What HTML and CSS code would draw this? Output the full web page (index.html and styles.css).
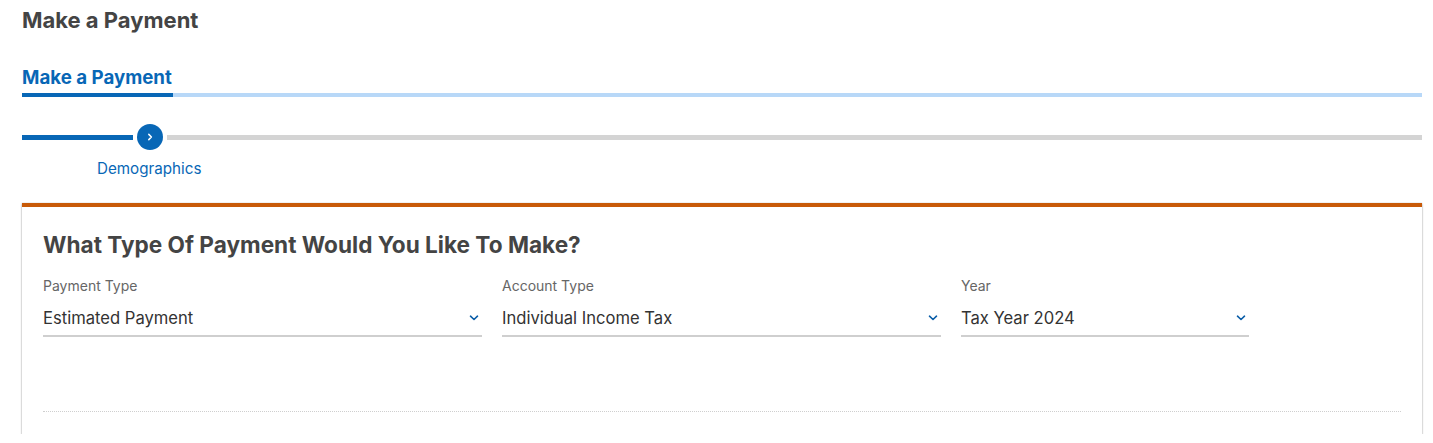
FILE: index.html
```html
<!DOCTYPE html>
<html lang="en">
<head>
<meta charset="utf-8">
<title>Make a Payment</title>
<link rel="stylesheet" href="styles.css">
</head>
<body>
<div class="page">
  <h1 class="page-title">Make a Payment</h1>
  <div class="tabs">
    <div class="tab active">Make a Payment</div>
  </div>
  <div class="stepper">
    <div class="step">
      <div class="step-track">
        <span class="seg seg-done"></span>
        <span class="step-dot">
          <svg width="10" height="10" viewBox="0 0 10 10"><path d="M3.8 2.4 L6.4 5 L3.8 7.6" fill="none" stroke="#fff" stroke-width="1.5" stroke-linecap="round" stroke-linejoin="round"/></svg>
        </span>
        <span class="seg seg-todo first"></span>
      </div>
      <div class="step-label">Demographics</div>
    </div>
    <div class="rest"></div>
  </div>
  <div class="card">
    <h2 class="card-title">What Type Of Payment Would You Like To Make?</h2>
    <div class="fields">
      <div class="field w-lg">
        <label class="field-label">Payment Type</label>
        <div class="select"><span>Estimated Payment</span><svg class="chev" width="10" height="6" viewBox="0 0 10 6"><path d="M1.5 1.2 L5 4.5 L8.5 1.2" fill="none" stroke="#0b5ea8" stroke-width="1.6" stroke-linecap="round" stroke-linejoin="round"/></svg></div>
      </div>
      <div class="field w-lg">
        <label class="field-label">Account Type</label>
        <div class="select"><span>Individual Income Tax</span><svg class="chev" width="10" height="6" viewBox="0 0 10 6"><path d="M1.5 1.2 L5 4.5 L8.5 1.2" fill="none" stroke="#0b5ea8" stroke-width="1.6" stroke-linecap="round" stroke-linejoin="round"/></svg></div>
      </div>
      <div class="field w-sm">
        <label class="field-label">Year</label>
        <div class="select"><span>Tax Year 2024</span><svg class="chev" width="10" height="6" viewBox="0 0 10 6"><path d="M1.5 1.2 L5 4.5 L8.5 1.2" fill="none" stroke="#0b5ea8" stroke-width="1.6" stroke-linecap="round" stroke-linejoin="round"/></svg></div>
      </div>
    </div>
    <div class="dotted"></div>
  </div>
</div>
</body>
</html>
```
FILE: styles.css
```css
* { box-sizing: border-box; }
html, body { margin: 0; padding: 0; background: #fff; }
body {
  font-family: Inter, "Noto Sans", "Liberation Sans", sans-serif;
  color: #444;
}
.page { padding: 6px 11px 0 22px; }

.page-title {
  margin: 0;
  font-size: 22px;
  line-height: 28px;
  font-weight: 700;
  color: #444;
}

.tabs {
  margin-top: 32px;
  display: flex;
  border-bottom: 4px solid #b8d8f8;
}
.tab {
  font-size: 18.7px;
  font-weight: 700;
  line-height: 24px;
  color: #0867b6;
  padding-bottom: 3px;
}
.tab.active {
  box-shadow: 0 4px 0 #0867b6;
  width: 151px;
}

.stepper {
  margin-top: 27px;
  display: flex;
}
.step { display: flex; flex-direction: column; width: 256px; }
.step-track { display: flex; align-items: center; height: 26px; }
.seg { height: 5px; display: block; }
.seg-done { width: 111px; background: #0867b6; margin-right: 4px; }
.seg-todo { flex: 1; background: #d4d4d4; margin-left: 4px; }
.step-dot {
  width: 26px; height: 26px; border-radius: 50%;
  background: #0867b6;
  display: flex; align-items: center; justify-content: center;
  flex: none;
}
.step-label {
  margin-top: 9px;
  width: 256px;
  font-size: 15.2px;
  line-height: 20px;
  color: #0867b6;
  padding-left: 75px;
}
.rest { flex: 1; height: 5px; background: #d4d4d4; margin-top: 10.5px; }

.card {
  margin-top: 24px;
  border-top: 4px solid #c85a08;
  box-shadow: 0 1px 2px rgba(0,0,0,0.35), 0 0 1px rgba(0,0,0,0.2);
  padding: 24px 21px 22px 21px;
}
.card-title {
  margin: 0;
  font-size: 22.6px;
  line-height: 28px;
  font-weight: 700;
  color: #444;
}
.fields { display: flex; gap: 20px; margin-top: 18px; }
.field { display: flex; flex-direction: column; }
.w-lg { width: 439px; }
.w-sm { width: 288px; }
.field-label { font-size: 14px; line-height: 18px; color: #666; }
.select {
  display: flex; align-items: center; justify-content: space-between;
  padding: 12px 0 6px 0;
  line-height: 22px;
  border-bottom: 2px solid #cfcfcf;
  font-size: 16.6px;
  color: #333;
}
.chev { margin-right: 3px; }
.dotted {
  margin-top: 74px;
  border-top: 1px dotted #cfcfcf;
}
```
